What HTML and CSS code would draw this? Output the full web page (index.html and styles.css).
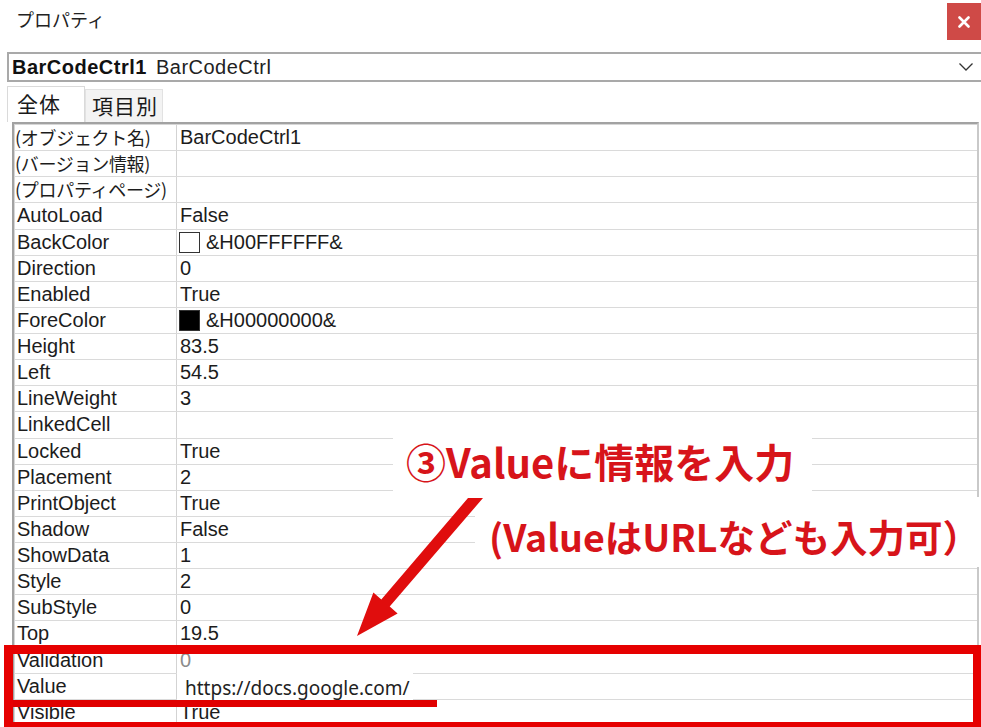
FILE: index.html
```html
<!DOCTYPE html>
<html lang="ja">
<head>
<meta charset="utf-8">
<title>プロパティ</title>
<link rel="stylesheet" href="styles.css">
</head>
<body>
<div class="window">
  <div class="titlebar">
    <div class="title">プロパティ</div>
    <div class="close">
      <svg width="12" height="12" viewBox="0 0 12 12"><path d="M1.5 1.5 L10.5 10.5 M10.5 1.5 L1.5 10.5" stroke="#fff" stroke-width="2.6" stroke-linecap="round"/></svg>
    </div>
  </div>
  <div class="combo">
    <span class="combo-name">BarCodeCtrl1</span>
    <span class="combo-type">BarCodeCtrl</span>
    <svg class="chevron" width="14" height="8" viewBox="0 0 14 8"><polyline points="0.5,0.5 7,7 13.5,0.5" fill="none" stroke="#333" stroke-width="1.3"/></svg>
  </div>
  <div class="tabs">
    <div class="tab active">全体</div>
    <div class="tab">項目別</div>
  </div>
  <div class="grid">
    <div class="rows">
      <div class="row"><div class="name jp">(オブジェクト名)</div><div class="val">BarCodeCtrl1</div></div>
      <div class="row"><div class="name jp">(バージョン情報)</div><div class="val"></div></div>
      <div class="row"><div class="name jp">(プロパティページ)</div><div class="val"></div></div>
      <div class="row"><div class="name">AutoLoad</div><div class="val">False</div></div>
      <div class="row"><div class="name">BackColor</div><div class="val"><span class="swatch white"></span>&amp;H00FFFFFF&amp;</div></div>
      <div class="row"><div class="name">Direction</div><div class="val">0</div></div>
      <div class="row"><div class="name">Enabled</div><div class="val">True</div></div>
      <div class="row"><div class="name">ForeColor</div><div class="val"><span class="swatch black"></span>&amp;H00000000&amp;</div></div>
      <div class="row"><div class="name">Height</div><div class="val">83.5</div></div>
      <div class="row"><div class="name">Left</div><div class="val">54.5</div></div>
      <div class="row"><div class="name">LineWeight</div><div class="val">3</div></div>
      <div class="row"><div class="name">LinkedCell</div><div class="val"></div></div>
      <div class="row"><div class="name">Locked</div><div class="val">True</div></div>
      <div class="row"><div class="name">Placement</div><div class="val">2</div></div>
      <div class="row"><div class="name">PrintObject</div><div class="val">True</div></div>
      <div class="row"><div class="name">Shadow</div><div class="val">False</div></div>
      <div class="row"><div class="name">ShowData</div><div class="val">1</div></div>
      <div class="row"><div class="name">Style</div><div class="val">2</div></div>
      <div class="row"><div class="name">SubStyle</div><div class="val">0</div></div>
      <div class="row"><div class="name">Top</div><div class="val">19.5</div></div>
      <div class="row"><div class="name">Validation</div><div class="val dim">0</div></div>
      <div class="row"><div class="name">Value</div><div class="val"></div></div>
      <div class="row"><div class="name">Visible</div><div class="val">True</div></div>
    </div>
  </div>
</div>

<div class="editor">https://docs.google.com/</div>

<div class="callout callout-1">③Valueに情報を入力</div>
<div class="callout callout-2">(ValueはURLなども入力可）</div>

<svg class="arrow" width="981" height="727" viewBox="0 0 981 727">
  <polygon points="468,498 483,498 389.7,606.6 397.6,613.4 357,636 373.4,592.6 381.3,599.4" fill="#e00d0d"/>
</svg>

<div class="highlight"></div>
<div class="underline"></div>
</body>
</html>
```

FILE: styles.css
```css
html, body {
  margin: 0;
  padding: 0;
  overflow: hidden;
  background: #ffffff;
}

body {
  width: 981px;
  height: 727px;
  font-family: "Liberation Sans", "Noto Sans CJK JP", sans-serif;
  color: #1c1c1c;
}

.window {
  width: 981px;
}

.titlebar {
  display: flex;
  justify-content: space-between;
  align-items: flex-start;
  height: 52px;
}

.title {
  padding-left: 16px;
  font-family: "Noto Sans CJK JP", sans-serif;
  font-size: 18px;
  line-height: 38px;
  color: #222;
}

.close {
  margin-top: 3px;
  width: 34px;
  height: 37px;
  background: #cf4a47;
  display: flex;
  align-items: center;
  justify-content: center;
}

.combo {
  box-sizing: border-box;
  margin-left: 7px;
  height: 30px;
  border-top: 2px solid #a9a9a9;
  border-bottom: 2px solid #a9a9a9;
  border-left: 2px solid #a9a9a9;
  display: flex;
  align-items: center;
  padding-left: 3px;
  font-size: 20px;
  line-height: 26px;
  letter-spacing: 0.5px;
}

.combo-name {
  font-weight: bold;
  color: #111;
}

.combo-type {
  margin-left: 9px;
  color: #222;
}

.chevron {
  margin-left: auto;
  margin-right: 8px;
}

.tabs {
  display: flex;
  align-items: flex-end;
  height: 40px;
  padding-left: 7px;
}

.tab {
  box-sizing: border-box;
  width: 78px;
  height: 33px;
  padding-left: 6px;
  font-family: "Noto Sans CJK JP", sans-serif;
  font-size: 21px;
  line-height: 30px;
  letter-spacing: 1px;
  background: #f3f3f3;
  border: 1px solid #e2e2e2;
  border-bottom: none;
  color: #1a1a1a;
}

.tab.active {
  height: 36px;
  padding-left: 9px;
  line-height: 33px;
  background: #ffffff;
  border-color: #dadada;
}

.grid {
  box-sizing: border-box;
  margin-left: 12px;
  width: 967px;
  border-top: 2px solid #a2a2a2;
  border-left: 2px solid #a2a2a2;
  border-right: 2px solid #c9c9c9;
}

.rows {
  border-top: 1px solid #d6d6d6;
  border-left: 1px solid #d6d6d6;
}

.row {
  box-sizing: border-box;
  display: flex;
  height: 26.14px;
  border-bottom: 1px solid #dadada;
  font-size: 20px;
  line-height: 25px;
}

.name {
  box-sizing: border-box;
  width: 162px;
  flex: none;
  padding-left: 2px;
  border-right: 1px solid #d3d3d3;
  white-space: nowrap;
  overflow: hidden;
}

.name.jp {
  padding-left: 0;
  font-family: "Noto Sans CJK JP", sans-serif;
  font-size: 18px;
  letter-spacing: -0.3px;
}

.val {
  display: flex;
  align-items: center;
  padding-left: 3px;
  white-space: nowrap;
}

.val.dim {
  color: #8c8c8c;
}

.swatch {
  box-sizing: border-box;
  width: 21px;
  height: 21px;
  margin-left: -1px;
  margin-right: 6px;
  border: 1px solid #333;
}

.swatch.white {
  background: #ffffff;
}

.swatch.black {
  background: #000000;
}

.editor {
  position: absolute;
  left: 177px;
  top: 672px;
  box-sizing: border-box;
  width: 236px;
  height: 28px;
  padding: 4px 0 0 8px;
  background: #ffffff;
  font-family: "Noto Sans", sans-serif;
  font-size: 19px;
  line-height: 24px;
  color: #222;
  white-space: nowrap;
}

.callout {
  position: absolute;
  box-sizing: border-box;
  background: #ffffff;
  display: flex;
  align-items: flex-start;
  font-family: "Noto Sans CJK JP", sans-serif;
  font-weight: bold;
  color: #d7141a;
  white-space: nowrap;
}

.callout-1 {
  left: 393px;
  top: 428px;
  width: 419px;
  height: 66px;
  padding: 13px 0 0 13px;
  font-size: 40px;
  line-height: 40px;
}

.callout-2 {
  left: 475px;
  top: 497px;
  width: 506px;
  height: 70px;
  padding: 20px 0 0 14px;
  font-size: 37.5px;
  line-height: 38px;
}

.arrow {
  position: absolute;
  left: 0;
  top: 0;
  pointer-events: none;
}

.highlight {
  position: absolute;
  left: 4px;
  top: 645px;
  box-sizing: border-box;
  width: 978px;
  height: 86px;
  border: 9px solid #e60000;
}

.underline {
  position: absolute;
  left: 13px;
  top: 700px;
  width: 424px;
  height: 7px;
  background: #e00000;
}
```
